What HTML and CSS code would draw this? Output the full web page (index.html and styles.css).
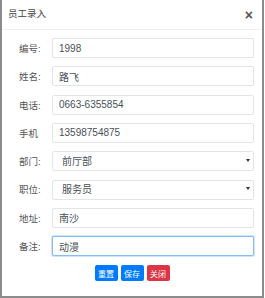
FILE: index.html
```html
<!DOCTYPE html>
<html lang="zh-CN">
<head>
    <meta charset="UTF-8">
    <title>员工录入</title>
    <link rel="stylesheet" href="styles.css">
</head>
<body>
    <div class="dialog">
        <!-- Header -->
        <div class="dialog-header">
            <span class="dialog-title">员工录入</span>
            <span class="close-btn">×</span>
        </div>

        <!-- Form -->
        <form class="staff-form">
            <div class="form-row">
                <label class="form-label">编号:</label>
                <input class="form-control" type="text" value="1998">
            </div>
            <div class="form-row">
                <label class="form-label">姓名:</label>
                <input class="form-control" type="text" value="路飞">
            </div>
            <div class="form-row">
                <label class="form-label">电话:</label>
                <input class="form-control" type="text" value="0663-6355854">
            </div>
            <div class="form-row">
                <label class="form-label">手机</label>
                <input class="form-control" type="text" value="13598754875">
            </div>
            <div class="form-row">
                <label class="form-label">部门:</label>
                <div class="select-wrap">
                    <select class="form-control form-select">
                        <option>前厅部</option>
                    </select>
                </div>
            </div>
            <div class="form-row">
                <label class="form-label">职位:</label>
                <div class="select-wrap">
                    <select class="form-control form-select">
                        <option>服务员</option>
                    </select>
                </div>
            </div>
            <div class="form-row">
                <label class="form-label">地址:</label>
                <input class="form-control" type="text" value="南沙">
            </div>
            <div class="form-row">
                <label class="form-label">备注:</label>
                <input class="form-control focused" type="text" value="动漫">
            </div>

            <div class="form-actions">
                <button type="button" class="btn btn-primary">重置</button>
                <button type="button" class="btn btn-primary">保存</button>
                <button type="button" class="btn btn-danger">关闭</button>
            </div>
        </form>
    </div>
</body>
</html>
```

FILE: styles.css
```css
body {
    margin: 0;
    background: #fff;
    font-family: "Liberation Sans", Arial, "Noto Sans CJK SC", sans-serif;
}

/* Dialog frame */
.dialog {
    box-sizing: border-box;
    width: 264px;
    height: 298px;
    background: #fff;
    border: solid #8c8c8c;
    border-width: 0 2px 2px 2px;
}

/* Header */
.dialog-header {
    height: 29px;
    display: flex;
    align-items: center;
    justify-content: space-between;
    padding: 0 9px 0 6px;
    border-bottom: 1px solid #eef0f2;
}

.dialog-title {
    font-size: 9.5px;
    color: #444;
    margin-top: -4px;
}

.close-btn {
    font-size: 14px;
    font-weight: bold;
    color: #555;
    line-height: 1;
}

/* Form */
.staff-form {
    margin: 0;
    padding: 8px 8px 0 17px;
    display: flex;
    flex-direction: column;
    row-gap: 8.3px;
}

.form-row {
    display: flex;
    align-items: center;
    height: 20px;
}

.form-label {
    width: 33px;
    font-size: 9.5px;
    color: #555;
}

.form-control {
    box-sizing: border-box;
    width: 202px;
    height: 20px;
    margin: 0;
    padding: 0 6px;
    font-family: inherit;
    font-size: 10px;
    color: #495057;
    background: #fff;
    border: 1px solid #e2e5e8;
    border-radius: 2px;
    outline: none;
}

.form-control.focused {
    border-color: #86bdf5;
    box-shadow: 0 0 0 1px #cfe4fb;
}

.select-wrap {
    position: relative;
    width: 202px;
}

.form-select {
    appearance: none;
    -webkit-appearance: none;
    padding-left: 9px;
}

.select-wrap::after {
    content: "";
    position: absolute;
    right: 4px;
    top: 8px;
    border-left: 2px solid transparent;
    border-right: 2px solid transparent;
    border-top: 3px solid #333;
}

/* Buttons */
.form-actions {
    display: flex;
    justify-content: center;
    gap: 3px;
    padding-top: 1px;
    margin-left: -9px;
}

.btn {
    width: 23px;
    height: 16px;
    padding: 0;
    border: none;
    border-radius: 2px;
    color: #fff;
    font-family: inherit;
    font-size: 8px;
    cursor: pointer;
}

.btn-primary {
    background: #007bff;
}

.btn-danger {
    background: #dc3545;
}
```
